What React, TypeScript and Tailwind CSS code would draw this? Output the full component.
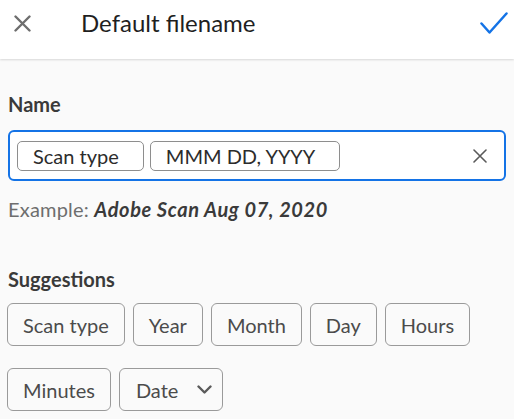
const suggestions = ["Scan type", "Year", "Month", "Day", "Hours", "Minutes"];

export default function App() {
  return (
    <div className="w-[514px] h-[419px] overflow-hidden bg-[#fafafa] text-[#2c2c2c]" style={{ fontFamily: "Lato, 'Noto Sans', sans-serif" }}>
      {/* HEADER */}
      <div className="h-[59px] bg-white shadow-[0_1px_2px_rgba(0,0,0,0.14)]">
        <div className="h-[46px] flex items-center">
          <svg width="17" height="17" viewBox="0 0 17 17" className="ml-[14px] text-[#6e6e6e]">
            <path d="M1.5 1.5 L15.5 15.5 M15.5 1.5 L1.5 15.5" stroke="currentColor" strokeWidth="2.4" strokeLinecap="round" />
          </svg>
          <h1 className="ml-[50px] text-[24px] leading-[30px] text-[#1f1f1f] flex-1">Default filename</h1>
          <svg width="28" height="23" viewBox="0 0 28 23" className="mr-[6px] text-[#1473e6]">
            <path d="M1.5 11.5 L9.5 20.5 L26.5 1.5" fill="none" stroke="currentColor" strokeWidth="2.5" strokeLinecap="round" strokeLinejoin="round" />
          </svg>
        </div>
      </div>

      <div className="px-[8px]">
        {/* NAME */}
        <div className="mt-[33px] text-[20px] leading-[24px] font-bold text-[#3a3a3a]">Name</div>
        <div className="mt-[14px] h-[51px] border-2 border-[#1473e6] rounded-[6px] bg-white flex items-center pl-[7px] pr-[17px] gap-[6px]">
          <span className="h-[30px] pl-[15px] pr-[24px] border border-[#8e8e8e] rounded-[5px] flex items-center text-[20px] text-[#2c2c2c]">Scan type</span>
          <span className="h-[30px] pl-[15px] pr-[24px] border border-[#8e8e8e] rounded-[5px] flex items-center text-[20px] text-[#2c2c2c]">MMM DD, YYYY</span>
          <span className="flex-1" />
          <svg width="14" height="14" viewBox="0 0 14 14" className="text-[#5a5a5a]">
            <path d="M1 1 L13 13 M13 1 L1 13" stroke="currentColor" strokeWidth="1.6" strokeLinecap="round" />
          </svg>
        </div>
        <div className="mt-[16px] text-[20px] leading-[24px] text-[#6e6e6e] tracking-[0.2px]">
          Example: <span className="font-bold italic text-[#3a3a3a] tracking-[0.6px]">Adobe Scan Aug 07, 2020</span>
        </div>

        {/* SUGGESTIONS */}
        <div className="mt-[46px] text-[20px] leading-[24px] font-bold text-[#3a3a3a]">Suggestions</div>
        <div className="mt-[12px] flex flex-wrap gap-x-[8px] gap-y-[22px] w-[480px] -ml-[1px]">
          {suggestions.map((s) => (
            <span key={s} className="h-[43px] px-[15px] border border-[#9a9a9a] rounded-[6px] flex items-center text-[20px] text-[#4b4b4b]">{s}</span>
          ))}
          <span className="h-[43px] pl-[16px] pr-[10px] border border-[#9a9a9a] rounded-[6px] flex items-center gap-[19px] text-[20px] text-[#4b4b4b]">
            Date
            <svg width="15" height="9" viewBox="0 0 15 9" className="text-[#5a5a5a]">
              <path d="M1.5 1.5 L7.5 7.5 L13.5 1.5" fill="none" stroke="currentColor" strokeWidth="2.4" strokeLinecap="round" strokeLinejoin="round" />
            </svg>
          </span>
        </div>
      </div>
    </div>
  );
}
